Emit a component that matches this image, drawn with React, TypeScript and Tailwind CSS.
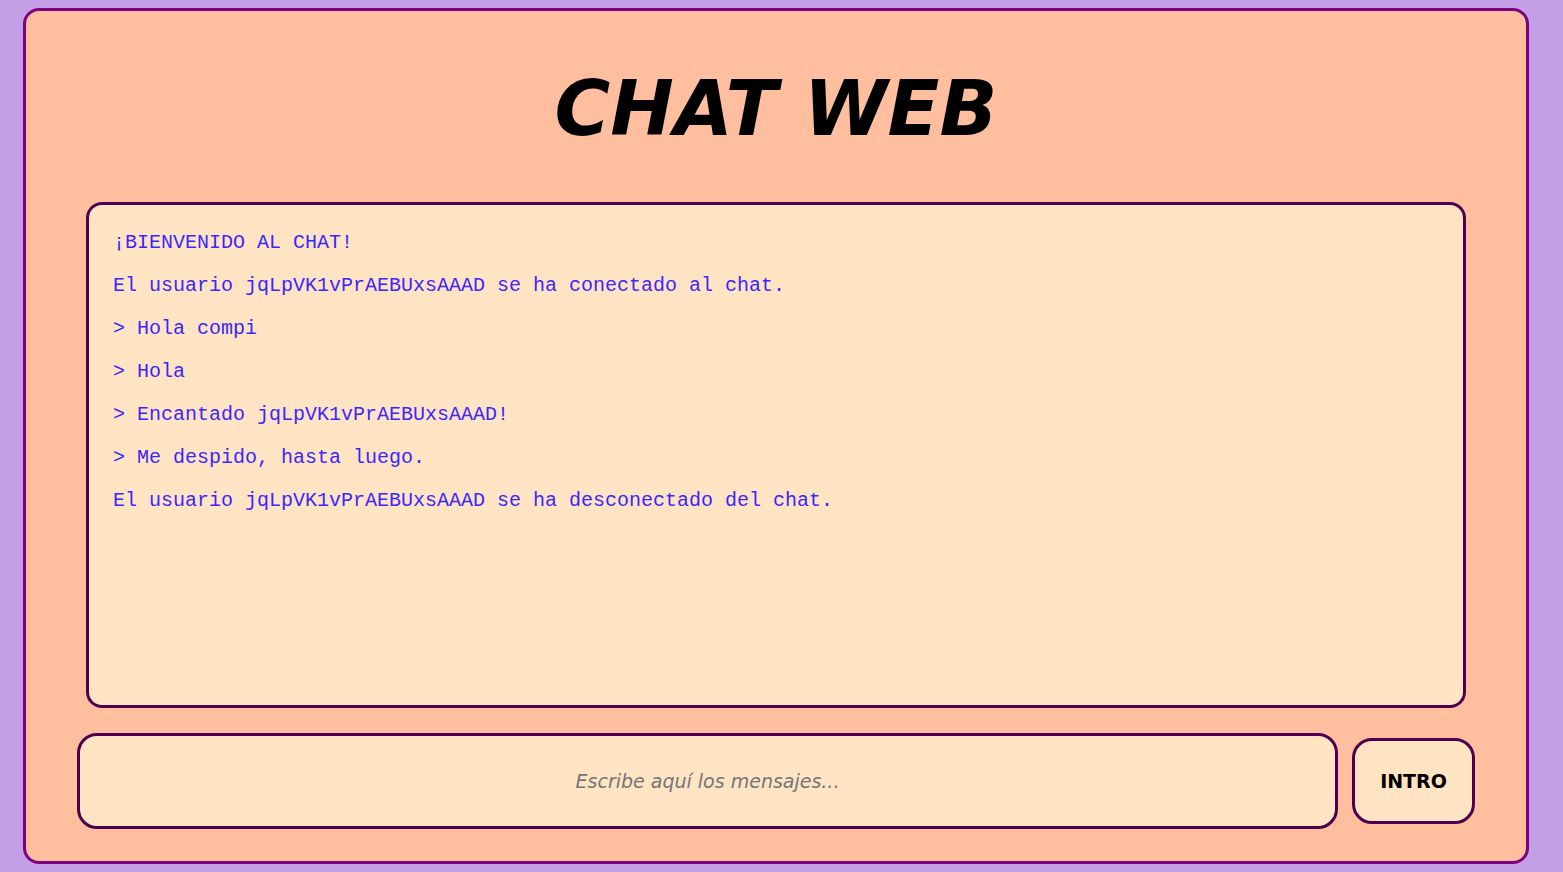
import React from 'react';

const messages: string[] = [
  '¡BIENVENIDO AL CHAT!',
  'El usuario jqLpVK1vPrAEBUxsAAAD se ha conectado al chat.',
  '> Hola compi',
  '> Hola',
  '> Encantado jqLpVK1vPrAEBUxsAAAD!',
  '> Me despido, hasta luego.',
  'El usuario jqLpVK1vPrAEBUxsAAAD se ha desconectado del chat.',
];

const App: React.FC = () => {
  return (
    <div className="min-h-screen bg-[#c39fe6] pt-[8px] pb-[8px]">
      <div className="ml-[23px] mr-[34px] h-[856px] border-[3px] border-[#800080] rounded-[16px] bg-[#ffbf9f] flex flex-col items-center px-[51px] pt-[54px] pb-[32px]">
        <h1 className="text-[76px] leading-[88px] font-bold italic text-black font-['DejaVu_Sans',Verdana,sans-serif]">
          CHAT WEB
        </h1>

        <div className="mt-[49px] w-[1380px] h-[507px] border-[3px] border-[#4d0050] rounded-[16px] bg-[#ffe4c4] px-[24px] pt-[16px]">
          {messages.map((msg, i) => (
            <p
              key={i}
              className="h-[43px] leading-[43px] text-[20px] text-[#3c26ff] whitespace-pre font-['Liberation_Mono','Courier_New',monospace]"
            >
              {msg}
            </p>
          ))}
        </div>

        <div className="mt-[25px] w-[1398px] flex items-center gap-[14px]">
          <input
            type="text"
            placeholder="Escribe aquí los mensajes..."
            className="flex-1 h-[96px] border-[3px] border-[#4d0050] rounded-[20px] bg-[#ffe4c4] text-center text-[19px] italic outline-none placeholder:text-[#757575] font-['DejaVu_Sans',Verdana,sans-serif]"
          />
          <button className="w-[123px] h-[86px] border-[3px] border-[#4d0050] rounded-[20px] bg-[#ffe4c4] text-[19px] font-bold text-black font-['DejaVu_Sans',Verdana,sans-serif]">
            INTRO
          </button>
        </div>
      </div>
    </div>
  );
};

export default App;
